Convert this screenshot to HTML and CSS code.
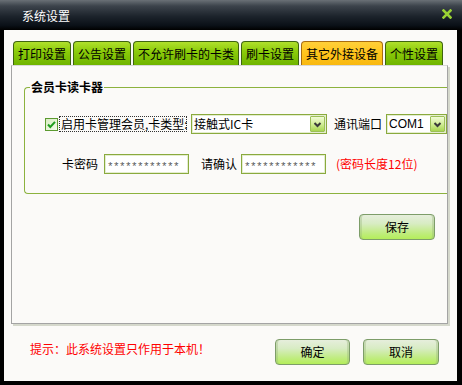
FILE: index.html
```html
<!DOCTYPE html>
<html lang="zh-CN">
<head>
<meta charset="utf-8">
<title>系统设置</title>
<link rel="stylesheet" href="styles.css">
</head>
<body>
<div class="window">
  <div class="titlebar">
    <span class="title">系统设置</span>
    <svg class="close" width="10" height="10" viewBox="0 0 10 10"><path d="M1.5 1.5 L8.5 8.5 M8.5 1.5 L1.5 8.5" stroke="#9ad234" stroke-width="2.6" stroke-linecap="square"/></svg>
  </div>
  <div class="client">
    <div class="tabs">
      <div class="tab">打印设置</div>
      <div class="tab">公告设置</div>
      <div class="tab">不允许刷卡的卡类</div>
      <div class="tab">刷卡设置</div>
      <div class="tab active">其它外接设备</div>
      <div class="tab">个性设置</div>
    </div>
    <div class="panel">
      <div class="group">
        <span class="group-title">会员卡读卡器</span>
        <div class="row row1">
          <svg class="checkbox" width="13" height="13" viewBox="0 0 13 13">
            <defs><linearGradient id="cbg" x1="0" y1="0" x2="1" y2="1"><stop offset="0" stop-color="#d6ecbf"/><stop offset="1" stop-color="#f6fbee"/></linearGradient></defs>
            <rect x="0.5" y="0.5" width="12" height="12" fill="url(#cbg)" stroke="#5c9a30"/>
            <path d="M3 6.5 L5.3 9 L10 3.8" fill="none" stroke="#1f9e1f" stroke-width="2"/>
          </svg>
          <span class="cb-label">启用卡管理会员,卡类型:</span>
          <div class="select select-type"><span class="sel-text">接触式IC卡</span><span class="drop"><svg width="13" height="13" viewBox="0 0 13 13"><path d="M3.5 5 L6.5 8 L9.5 5" fill="none" stroke="#3a3a3a" stroke-width="2"/></svg></span></div>
          <span class="lbl port-lbl">通讯端口</span>
          <div class="select select-port"><span class="sel-text latin">COM1</span><span class="drop"><svg width="13" height="13" viewBox="0 0 13 13"><path d="M3.5 5 L6.5 8 L9.5 5" fill="none" stroke="#3a3a3a" stroke-width="2"/></svg></span></div>
        </div>
        <div class="row row2">
          <span class="lbl">卡密码</span>
          <div class="input pw1">************</div>
          <span class="lbl confirm-lbl">请确认</span>
          <div class="input pw2">************</div>
          <span class="hint">(密码长度12位)</span>
        </div>
      </div>
      <div class="save-row">
        <div class="btn">保存</div>
      </div>
    </div>
    <div class="bottom">
      <span class="notice">提示：此系统设置只作用于本机！</span>
      <div class="btn ok">确定</div>
      <div class="btn cancel">取消</div>
    </div>
  </div>
</div>
</body>
</html>
```
FILE: styles.css
```css
* { box-sizing: border-box; }
html, body { margin: 0; padding: 0; background: #000; }
body { font-family: "Noto Sans CJK SC", "Noto Sans", sans-serif; font-size: 12px; color: #000; }

.window {
  width: 462px;
  height: 385px;
  background: #000;
  display: flex;
  flex-direction: column;
}

.titlebar {
  height: 30px;
  flex: none;
  display: flex;
  align-items: center;
  padding-left: 22px;
  padding-right: 10px;
  background: linear-gradient(#6a7076 0%, #3c434b 20%, #1c232b 55%, #0a1017 85%, #000 100%);
}
.title { color: #fff; font-size: 12px; line-height: 12px; margin-top: 2px; }
.close { margin-left: auto; margin-top: -2px; }

.client {
  flex: 1;
  margin: 0 5px 4px 4px;
  background: #fbfaf8;
  padding: 11px 0 0 7px;
  display: flex;
  flex-direction: column;
}

.tabs { display: flex; gap: 2px; margin-left: 2px; height: 24px; }
.tab {
  height: 24px;
  padding: 0 4px;
  border: 1px solid #3f6410;
  border-bottom: none;
  border-radius: 4px 4px 0 0;
  background: linear-gradient(#b0e02c 0%, #8ccc0a 40%, #6fb400 100%);
  line-height: 23px;
  white-space: nowrap;
  color: #000;
}
.tab.active {
  border-color: #a86c10;
  background: linear-gradient(#ffd03a 0%, #ffc41c 50%, #f8b810 100%);
}

.panel {
  width: 437px;
  height: 259px;
  border: 1px solid #a4a4a4;
  border-top-color: #d9d9d9;
  box-shadow: 2px 2px 0 #d5d8cc;
  background: #fbfaf8;
  padding: 21px 0 0 12px;
  overflow: hidden;
  display: flex;
  flex-direction: column;
}

.group {
  position: relative;
  border: 1px solid #8cb23e;
  border-right: none;
  border-radius: 4px 0 0 4px;
  padding: 26px 0 19px 20px;
}
.group-title {
  position: absolute;
  top: -8px;
  left: 5px;
  padding: 0 1px;
  background: #fbfaf8;
  font-weight: bold;
  line-height: 14px;
}

.row { display: flex; align-items: center; height: 20px; }
.row2 { margin-top: 20px; padding-left: 17px; }

.checkbox { flex: none; }
.cb-label {
  margin-left: 1px;
  padding: 0 0 0 1px;
  border: 1px dotted #333;
  line-height: 14px;
  width: 128px;
  white-space: nowrap;
}

.select {
  height: 20px;
  border: 1px solid #8aaa3e;
  box-shadow: inset 0 0 0 1px #e4edcf;
  background: #fff;
  display: flex;
  align-items: center;
  padding: 0 1px 0 2px;
}
.select-type { width: 136px; margin-left: 4px; }
.select-port { width: 61px; margin-left: 4px; }
.sel-text { flex: 1; white-space: nowrap; line-height: 14px; }
.latin { font-family: "Liberation Sans", sans-serif; font-size: 12px; }
.drop {
  width: 15px;
  height: 16px;
  border: 1px solid #9cbf58;
  border-radius: 1px;
  background: linear-gradient(#f0fad6 0%, #d2ee98 50%, #a8d650 100%);
  display: flex;
  align-items: center;
  justify-content: center;
}

.lbl { white-space: nowrap; line-height: 14px; }
.port-lbl { margin-left: 7px; }
.confirm-lbl { margin-left: 12px; }

.input {
  height: 20px;
  width: 85px;
  margin-left: 6px;
  border: 1px solid #8aaa3e;
  box-shadow: inset 0 0 0 1px #e4edcf;
  background: #fff;
  color: #5a5a5a;
  font-family: "Liberation Mono", monospace;
  font-size: 11px;
  letter-spacing: -0.6px;
  line-height: 14px;
  padding: 5px 0 0 2px;
  overflow: hidden;
  white-space: nowrap;
}
.pw2 { margin-left: 4px; }
.hint { color: #ff0000; margin-left: 10px; white-space: nowrap; line-height: 14px; }

.save-row { display: flex; justify-content: flex-end; margin-top: 20px; padding-right: 12px; }

.btn {
  width: 76px;
  height: 26px;
  border: 1px solid #7d9d69;
  border-radius: 4px;
  background: linear-gradient(#e6eedc 0%, #d8ecc4 35%, #c0ec80 75%, #b4ee5a 100%);
  box-shadow: inset 2px 0 0 rgba(150,180,120,0.35), inset -2px 0 0 rgba(150,180,120,0.35);
  display: flex;
  align-items: center;
  justify-content: center;
  line-height: 14px;
}

.bottom {
  display: flex;
  align-items: center;
  margin-top: 15px;
  padding-left: 19px;
  padding-right: 18px;
}
.notice { color: #ff0000; white-space: nowrap; margin-right: auto; margin-top: -7px; }
.ok { width: 75px; }
.cancel { margin-left: 13px; }
```
